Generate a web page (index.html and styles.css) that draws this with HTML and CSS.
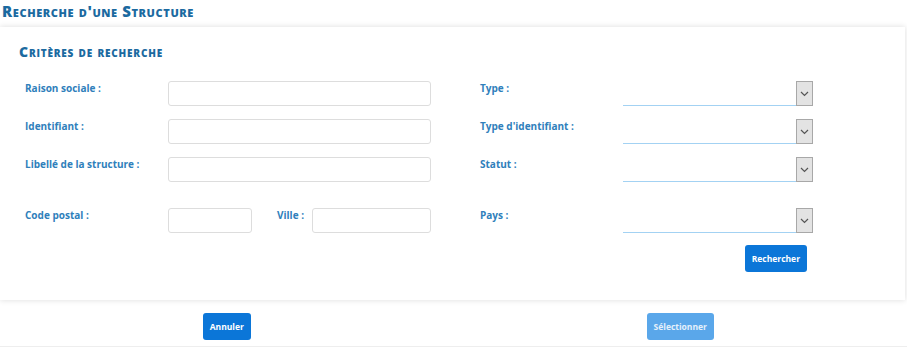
FILE: index.html
```html
<!DOCTYPE html>
<html lang="fr">
<head>
    <meta charset="UTF-8">
    <title>Recherche d'une Structure</title>
    <link rel="stylesheet" href="styles.css">
</head>
<body>
    <h1 class="page-title">Recherche d'une Structure</h1>

    <div class="card">
        <h2 class="card-title">Critères de recherche</h2>

        <div class="form">
            <div class="column">
                <div class="row">
                    <label class="label">Raison sociale :</label>
                    <input class="input" type="text">
                </div>
                <div class="row">
                    <label class="label">Identifiant :</label>
                    <input class="input" type="text">
                </div>
                <div class="row">
                    <label class="label">Libellé de la structure :</label>
                    <input class="input" type="text">
                </div>
                <div class="row row-last">
                    <label class="label">Code postal :</label>
                    <input class="input input-small" type="text">
                    <label class="label label-inline">Ville :</label>
                    <input class="input input-city" type="text">
                </div>
            </div>

            <div class="column">
                <div class="row">
                    <label class="label">Type :</label>
                    <div class="select"><span class="select-btn"><svg width="9" height="6" viewBox="0 0 9 6"><path d="M1 1l3.5 3.5L8 1" fill="none" stroke="#555" stroke-width="1.2"/></svg></span></div>
                </div>
                <div class="row">
                    <label class="label">Type d'identifiant :</label>
                    <div class="select"><span class="select-btn"><svg width="9" height="6" viewBox="0 0 9 6"><path d="M1 1l3.5 3.5L8 1" fill="none" stroke="#555" stroke-width="1.2"/></svg></span></div>
                </div>
                <div class="row">
                    <label class="label">Statut :</label>
                    <div class="select"><span class="select-btn"><svg width="9" height="6" viewBox="0 0 9 6"><path d="M1 1l3.5 3.5L8 1" fill="none" stroke="#555" stroke-width="1.2"/></svg></span></div>
                </div>
                <div class="row row-last">
                    <label class="label">Pays :</label>
                    <div class="select"><span class="select-btn"><svg width="9" height="6" viewBox="0 0 9 6"><path d="M1 1l3.5 3.5L8 1" fill="none" stroke="#555" stroke-width="1.2"/></svg></span></div>
                </div>
                <div class="actions">
                    <button class="btn">Rechercher</button>
                </div>
            </div>
        </div>
    </div>

    <div class="footer">
        <div class="footer-cell"><button class="btn">Annuler</button></div>
        <div class="footer-cell"><button class="btn btn-disabled">Sélectionner</button></div>
    </div>
</body>
</html>
```

FILE: styles.css
```css
* {
    margin: 0;
    padding: 0;
    box-sizing: border-box;
}

body {
    font-family: "Open Sans", Lato, sans-serif;
    background-color: white;
    width: 907px;
    height: 347px;
    overflow: hidden;
}

.page-title {
    font-size: 15px;
    font-weight: 800;
    font-variant: small-caps;
    color: #1b6aa0;
    height: 27px;
    padding: 1px 0 0 2px;
    letter-spacing: 0.6px;
}

.card {
    background-color: white;
    box-shadow: 0 0 6px rgba(0,0,0,0.14);
    margin-right: 2px;
    height: 273px;
    padding: 15px 0 0 0;
}

.card-title {
    font-size: 14px;
    font-weight: 800;
    font-variant: small-caps;
    color: #1b6aa0;
    padding-left: 19px;
    letter-spacing: 0.8px;
    height: 39px;
}

.form {
    display: flex;
    gap: 49px;
    padding-left: 25px;
}

.column {
    display: flex;
    flex-direction: column;
}

.row {
    display: flex;
    align-items: flex-start;
    height: 38px;
}

.row-last {
    margin-top: 13px;
}

.label {
    width: 143px;
    font-size: 10px;
    font-weight: 700;
    color: #2f80bb;
}

.label-inline {
    width: 60px;
    padding-left: 25px;
}

.input {
    width: 263px;
    height: 25px;
    border: 1px solid #ddd;
    border-radius: 3px;
    background: white;
}

.input-small {
    width: 84px;
}

.input-city {
    width: 119px;
}

.select {
    width: 190px;
    height: 25px;
    border-bottom: 1px solid #a3d2f3;
    display: flex;
    justify-content: flex-end;
}

.select-btn {
    width: 17px;
    height: 25px;
    background-color: #e3e3e3;
    border: 1px solid #a8a8a8;
    display: flex;
    align-items: center;
    justify-content: center;
}

.actions {
    display: flex;
    justify-content: flex-end;
    padding-right: 6px;
    margin-top: -1px;
}

.btn {
    font-family: "Open Sans", Lato, sans-serif;
    font-size: 8.5px;
    font-weight: 700;
    color: white;
    background-color: #0b76d8;
    border: none;
    border-radius: 3px;
    height: 27px;
    padding: 0 7px;
}

.btn-disabled {
    background-color: #5aa7ea;
    color: #e4f0fb;
}

.footer {
    display: flex;
    margin-top: 13px;
    height: 34px;
    border-bottom: 1px solid #eeeeee;
}

.footer-cell {
    flex: 1;
    display: flex;
    justify-content: center;
    align-items: flex-start;
}
```
